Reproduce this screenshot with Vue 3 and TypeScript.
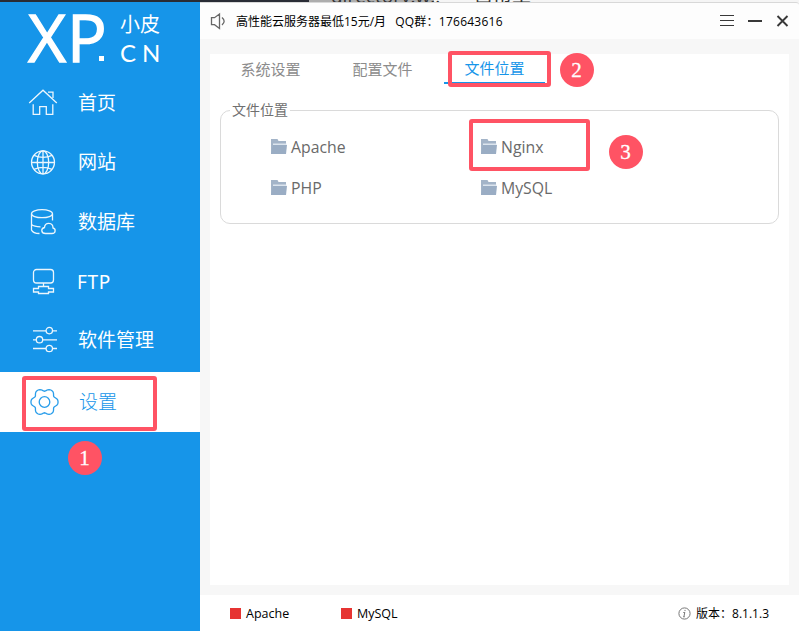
<script setup lang="ts">
type IconName = 'home' | 'globe' | 'database' | 'ftp' | 'sliders' | 'gear'

interface NavItem {
  id: IconName
  label: string
}

const nav: NavItem[] = [
  { id: 'home', label: '首页' },
  { id: 'globe', label: '网站' },
  { id: 'database', label: '数据库' },
  { id: 'ftp', label: 'FTP' },
  { id: 'sliders', label: '软件管理' },
  { id: 'gear', label: '设置' },
]
const activeNav: IconName = 'gear'

const tabs: string[] = ['系统设置', '配置文件', '文件位置']
const activeTab = '文件位置'

const locations: string[] = ['Apache', 'Nginx', 'PHP', 'MySQL']
const services: string[] = ['Apache', 'MySQL']

// Six rounded lobes around a centre, sampled every 5 degrees.
function gearOutline(cx: number, cy: number): string {
  const points: string[] = []
  for (let deg = 0; deg < 360; deg += 5) {
    const t = (deg * Math.PI) / 180
    const r = 12.4 + 1.4 * Math.cos(6 * t) - 0.25 * Math.cos(12 * t)
    points.push(`${(cx + r * Math.cos(t)).toFixed(2)} ${(cy + r * Math.sin(t)).toFixed(2)}`)
  }
  return `M${points.join('L')}Z`
}
const gearPath = gearOutline(16.5, 15)
</script>

<template>
  <div class="window">
    <div class="backdrop"><span class="backdrop-text">directory.w..&nbsp;&nbsp; 一白市工</span></div>

    <aside class="sidebar">
      <div class="logo">
        <div class="logo-xp"><span class="lx">X</span><span class="lp">P</span><span class="dot"></span></div>
        <div class="logo-side">
          <span class="logo-cn">小皮</span>
          <span class="logo-en">CN</span>
        </div>
      </div>
      <nav>
        <div v-for="item in nav" :key="item.id" class="nav-item" :class="[item.id, { active: item.id === activeNav }]">
          <svg class="nav-icon" width="30" height="30" viewBox="0 0 30 30">
            <g v-if="item.id === 'home'">
              <path d="M1.200 16 15 3.200 28.800 16M5.200 17.200V27.300H11.700V19.700H18.300V27.300H24.800V17.200M20 5.200H25V11" />
            </g>
            <g v-else-if="item.id === 'globe'">
              <circle cx="15" cy="15.300" r="11.500" />
              <ellipse cx="15" cy="15.300" rx="5.700" ry="11.500" />
              <path d="M15 3.800V26.800M3.500 15.500H26.500M6 8.300Q15 12.300 24 8.300M6 22.300Q15 18.300 24 22.300" />
            </g>
            <g v-else-if="item.id === 'database'">
              <ellipse cx="14" cy="6.700" rx="10.500" ry="4" />
              <path d="M3.500 7V23Q5 26.500 11.500 26.500M24.500 7V13.500M3.500 17.500Q6 19.800 12.500 19.800" />
              <path d="M17.500 26.500H24C28 26.500 28 21.500 25 21C25 15 17 15 16.500 20.500C12.500 21.500 13 26.500 17.500 26.500Z" />
            </g>
            <g v-else-if="item.id === 'ftp'">
              <rect x="5.500" y="2.500" width="20" height="13.500" rx="3" />
              <path d="M15.500 16V19.500M10.500 19.500H20.500V21.500H25.500V25H20.500V26.500H10.500V25H5.500V21.500H10.500Z" />
            </g>
            <g v-else-if="item.id === 'sliders'">
              <path d="M5 5.800H18M24.500 5.800H29M5 14.800H8M14.500 14.800H29M5 23.500H18M24.500 23.500H29" />
              <circle cx="21.300" cy="5.600" r="3.200" />
              <circle cx="11.500" cy="14.700" r="3.200" />
              <circle cx="21.300" cy="23.500" r="3.200" />
            </g>
            <g v-else>
              <path :d="gearPath" />
              <circle cx="16.500" cy="15" r="5.300" />
            </g>
          </svg>
          <span class="nav-label">{{ item.label }}</span>
        </div>
      </nav>
    </aside>

    <main class="main">
      <header class="titlebar">
        <svg class="speaker" width="16" height="18" viewBox="0 0 16 18">
          <path d="M1.500 5.700H4.500L9.500 2V16.500L4.500 12.700H1.500ZM12 5.500Q16.300 9.200 12 13" />
        </svg>
        <span class="notice">高性能云服务器最低15元/月</span>
        <span class="group">QQ群：176643616</span>
        <svg class="controls" width="70" height="14" viewBox="0 0 70 14">
          <path d="M0 1.500H14M0 6.500H14M0 11.500H14" stroke-width="1" />
          <path d="M28 7H42" stroke-width="2" />
          <path d="M57.500 2 67.500 12M67.500 2 57.500 12" stroke-width="1.900" />
        </svg>
      </header>

      <section class="panel">
        <div class="tabs">
          <div v-for="tab in tabs" :key="tab" class="tab" :class="{ active: tab === activeTab }">{{ tab }}</div>
        </div>
        <div class="group-box">
          <div class="group-title">文件位置</div>
          <div class="locations">
            <div v-for="name in locations" :key="name" class="location">
              <svg width="16" height="15" viewBox="0 0 16 15">
                <path d="M0 15V0H6.500L7.500 2H15V6H2V15Z" fill="#a3b4c8" />
                <path d="M2 4.500H15.500V6H2Z" fill="#dce5ee" />
                <path d="M1.800 6H16L15 15H0Z" fill="#9aadc4" />
              </svg>
              <span>{{ name }}</span>
            </div>
          </div>
        </div>
      </section>

      <footer class="statusbar">
        <div v-for="name in services" :key="name" class="service"><i></i><span>{{ name }}</span></div>
        <div class="version">
          <svg width="13" height="13" viewBox="0 0 13 13">
            <circle cx="6.500" cy="6.500" r="5.600" />
            <path d="M6.800 5.300 5.900 9.800M5.300 5.500H6.800M5.200 9.800H6.800M7 2.900V4.100" />
          </svg>
          <span>版本：</span><b>8.1.1.3</b>
        </div>
      </footer>
    </main>

    <div class="mark mark-nav"></div>
    <div class="mark mark-tab"></div>
    <div class="mark mark-location"></div>
    <div class="step step-1">1</div>
    <div class="step step-2">2</div>
    <div class="step step-3">3</div>
  </div>
</template>

<style>
body {
  margin: 0;
  overflow: hidden;
}
</style>

<style scoped>
.window {
  position: relative;
  display: grid;
  grid-template: 2px 629px / 200px 599px;
  width: 799px;
  height: 631px;
  overflow: hidden;
  font-family: 'Open Sans', 'Noto Sans CJK SC', sans-serif;
}
.window * {
  box-sizing: border-box;
}
svg {
  flex: none;
  fill: none;
}
.backdrop {
  grid-column: 1 / 3;
  display: flex;
  align-items: flex-end;
  overflow: hidden;
  background: linear-gradient(90deg, #292c35 0 309px, #adadad 309px 434px, #f5f5f5 434px);
}
.backdrop-text {
  margin-left: 331px;
  font-size: 19px;
  line-height: 19px;
  margin-bottom: -4px;
  color: #333;
  white-space: nowrap;
}
.sidebar {
  background: #1695e9;
  color: #fff;
}
.logo {
  display: flex;
  height: 70px;
}
.logo-xp {
  display: flex;
  width: 120px;
  padding-left: 28px;
  font-size: 66px;
  font-weight: 400;
  line-height: 68px;
  -webkit-text-stroke: 1.300px #fff;
}
.lx {
  width: 39px;
}
.lp {
  width: 32px;
}
.dot {
  align-self: flex-end;
  width: 5px;
  height: 5px;
  margin-bottom: 11px;
  background: #fff;
}
.logo-side {
  display: flex;
  flex-direction: column;
  padding-top: 11px;
}
.logo-cn {
  font-size: 20px;
  line-height: 24px;
}
.logo-en {
  font-family: Lato, sans-serif;
  font-size: 24px;
  line-height: 32px;
  letter-spacing: 6px;
}
.nav-item {
  display: flex;
  align-items: center;
  height: 60px;
  padding-left: 28px;
  font-size: 19px;
  font-weight: 400;
}
.nav-icon {
  stroke: #fff;
  stroke-width: 1.300;
  opacity: 0.920;
}
.nav-label {
  margin-left: 20px;
  line-height: 28px;
}
.sliders {
  padding-bottom: 5px;
}
.home .nav-label {
  padding-top: 1px;
}
.ftp .nav-label {
  font-family: 'Noto Sans', sans-serif;
  font-size: 19px;
  letter-spacing: 0.600px;
  margin-left: 19px;
}
.nav-item.active {
  background: #fff;
  color: #1695e9;
}
.active .nav-label {
  margin-left: 21px;
  font-weight: 300;
}
.active .nav-icon {
  stroke: #1695e9;
  overflow: visible;
}
.main {
  display: flex;
  flex-direction: column;
  background: #f7f7f7;
}
.titlebar {
  display: flex;
  align-items: center;
  height: 37px;
  padding: 0 9px 0 10px;
  border-top: 1px solid #d8d8d8;
  border-radius: 0 3px 0 0;
  background: #fdfdfd;
  color: #000;
  font-size: 12px;
}
.speaker {
  stroke: #666;
  stroke-width: 1.300;
}
.notice {
  margin-left: 10px;
}
.group {
  margin-left: 9px;
  letter-spacing: 0.250px;
}
.controls {
  margin-left: auto;
  stroke: #383838;
}
.panel {
  height: 531px;
  margin: 15px 10px 10px;
  padding: 0 10px;
  background: #fff;
}
.tabs {
  display: flex;
  gap: 11px;
  height: 30px;
}
.tab {
  width: 101px;
  height: 30px;
  border-bottom: 2px solid transparent;
  color: #8c8c8c;
  font-size: 15px;
  line-height: 30px;
  text-align: center;
}
.tab.active {
  border-color: #1695e9;
  color: #1695e9;
  line-height: 28px;
}
.group-box {
  width: 559px;
  height: 114px;
  margin-top: 26px;
  padding: 0 40px 0 50px;
  border: 1px solid #dadada;
  border-radius: 10px;
}
.group-title {
  width: 60px;
  height: 20px;
  margin: -11px 0 0 -41px;
  padding-left: 2px;
  background: #fff;
  color: #707070;
  font-size: 14px;
  line-height: 20px;
}
.locations {
  display: grid;
  grid-template-columns: 210px 210px;
  grid-auto-rows: 41px;
  margin-top: 6px;
}
.location {
  display: flex;
  align-items: center;
  gap: 4px;
  color: #6a6a6a;
  font-size: 15.800px;
}
.statusbar {
  display: flex;
  align-items: center;
  height: 36px;
  padding: 0 30px;
  background: #fff;
  color: #000;
  font-size: 12.500px;
}
.service {
  display: flex;
  align-items: center;
  gap: 5px;
  width: 111px;
}
.service i {
  width: 11px;
  height: 11px;
  background: #e63432;
}
.version {
  display: flex;
  align-items: center;
  margin-left: auto;
  font-size: 12px;
}
.version svg {
  margin-right: 5px;
  stroke: #777;
  stroke-width: 1;
}
.version b {
  font-weight: 400;
}
.mark {
  position: absolute;
  border: 4px solid #ff5364;
  border-radius: 3px;
}
.mark-nav {
  left: 22px;
  top: 376px;
  width: 135px;
  height: 55px;
}
.mark-tab {
  left: 448px;
  top: 51px;
  width: 103px;
  height: 36px;
}
.mark-location {
  left: 469px;
  top: 119px;
  width: 121px;
  height: 52px;
}
.step {
  position: absolute;
  width: 34px;
  height: 34px;
  border-radius: 50%;
  background: #ff5364;
  color: #fff;
  font-family: 'Liberation Serif', serif;
  font-size: 21px;
  line-height: 34px;
  text-align: center;
  -webkit-text-stroke: 0.300px #fff;
}
.step-1 {
  left: 67.500px;
  top: 441px;
}
.step-2 {
  left: 559.500px;
  top: 53px;
}
.step-3 {
  left: 608.500px;
  top: 135px;
}
</style>
